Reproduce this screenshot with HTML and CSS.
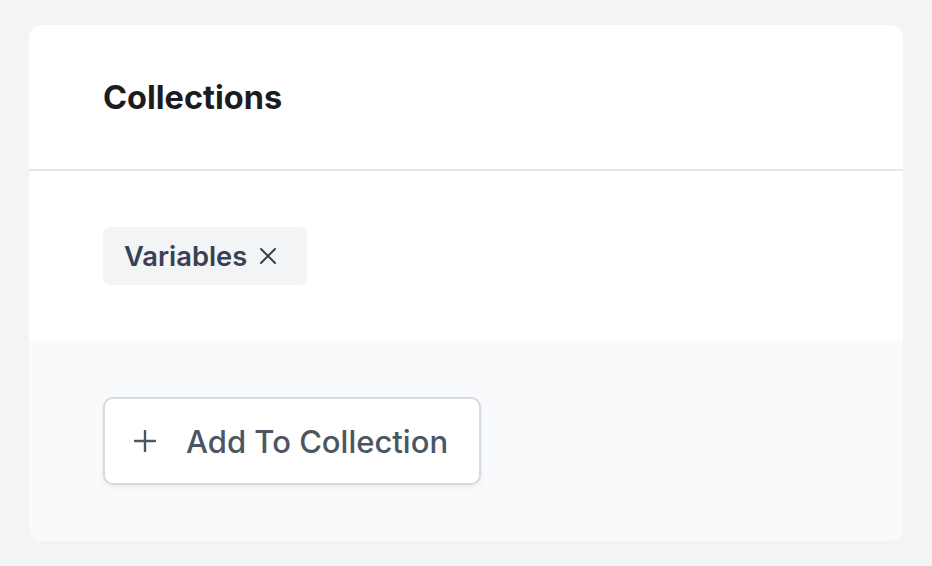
FILE: index.html
```html
<!DOCTYPE html>
<html lang="en">
<head>
    <meta charset="UTF-8">
    <meta name="viewport" content="width=device-width, initial-scale=1.0">
    <title>Collections</title>
    <link rel="stylesheet" href="styles.css">
</head>
<body>

    <div class="card">
        <div class="card-header">
            <h2>Collections</h2>
        </div>

        <div class="card-body">
            <span class="tag">
                Variables
                <svg class="tag-remove" width="18" height="18" viewBox="0 0 18 18">
                    <path d="M2 2 L16 16 M16 2 L2 16" stroke="currentColor" stroke-width="2" stroke-linecap="round"/>
                </svg>
            </span>
        </div>

        <div class="card-footer">
            <button class="add-button">
                <svg class="plus-icon" width="22" height="22" viewBox="0 0 22 22">
                    <path d="M11 1 V21 M1 11 H21" stroke="currentColor" stroke-width="2.4" stroke-linecap="round"/>
                </svg>
                <span>Add To Collection</span>
            </button>
        </div>
    </div>

</body>
</html>
```

FILE: styles.css
```css
body {
    font-family: Inter, "Noto Sans", sans-serif;
    background-color: #f3f4f6;
    margin: 0;
    padding: 25px 29px;
}

.card {
    background-color: white;
    border-radius: 14px;
    overflow: hidden;
    width: 874px;
}

.card-header {
    height: 144px;
    padding: 0 74px;
    display: flex;
    align-items: center;
    border-bottom: 2px solid #e5e7eb;
}

.card-header h2 {
    margin: 0;
    font-size: 32.5px;
    font-weight: 700;
    color: #1c1c1e;
}

.card-body {
    padding: 56px 74px;
}

.tag {
    display: inline-flex;
    align-items: center;
    gap: 12px;
    height: 58px;
    padding: 0 30px 0 21px;
    background-color: #f3f4f6;
    border-radius: 8px;
    font-size: 27.3px;
    font-weight: 600;
    color: #374151;
}

.tag-remove {
    color: #374151;
}

.card-footer {
    background-color: #f9fafb;
    padding: 56px 74px;
}

.add-button {
    display: inline-flex;
    align-items: center;
    gap: 30px;
    height: 88px;
    padding: 0 31px 0 29px;
    background-color: white;
    border: 2px solid #d7dbe0;
    border-radius: 10px;
    box-shadow: 0 2px 4px rgba(0, 0, 0, 0.07);
    font-family: inherit;
    font-size: 31px;
    font-weight: 500;
    color: #4b5563;
    cursor: pointer;
}

.plus-icon {
    color: #4b5563;
}
```
